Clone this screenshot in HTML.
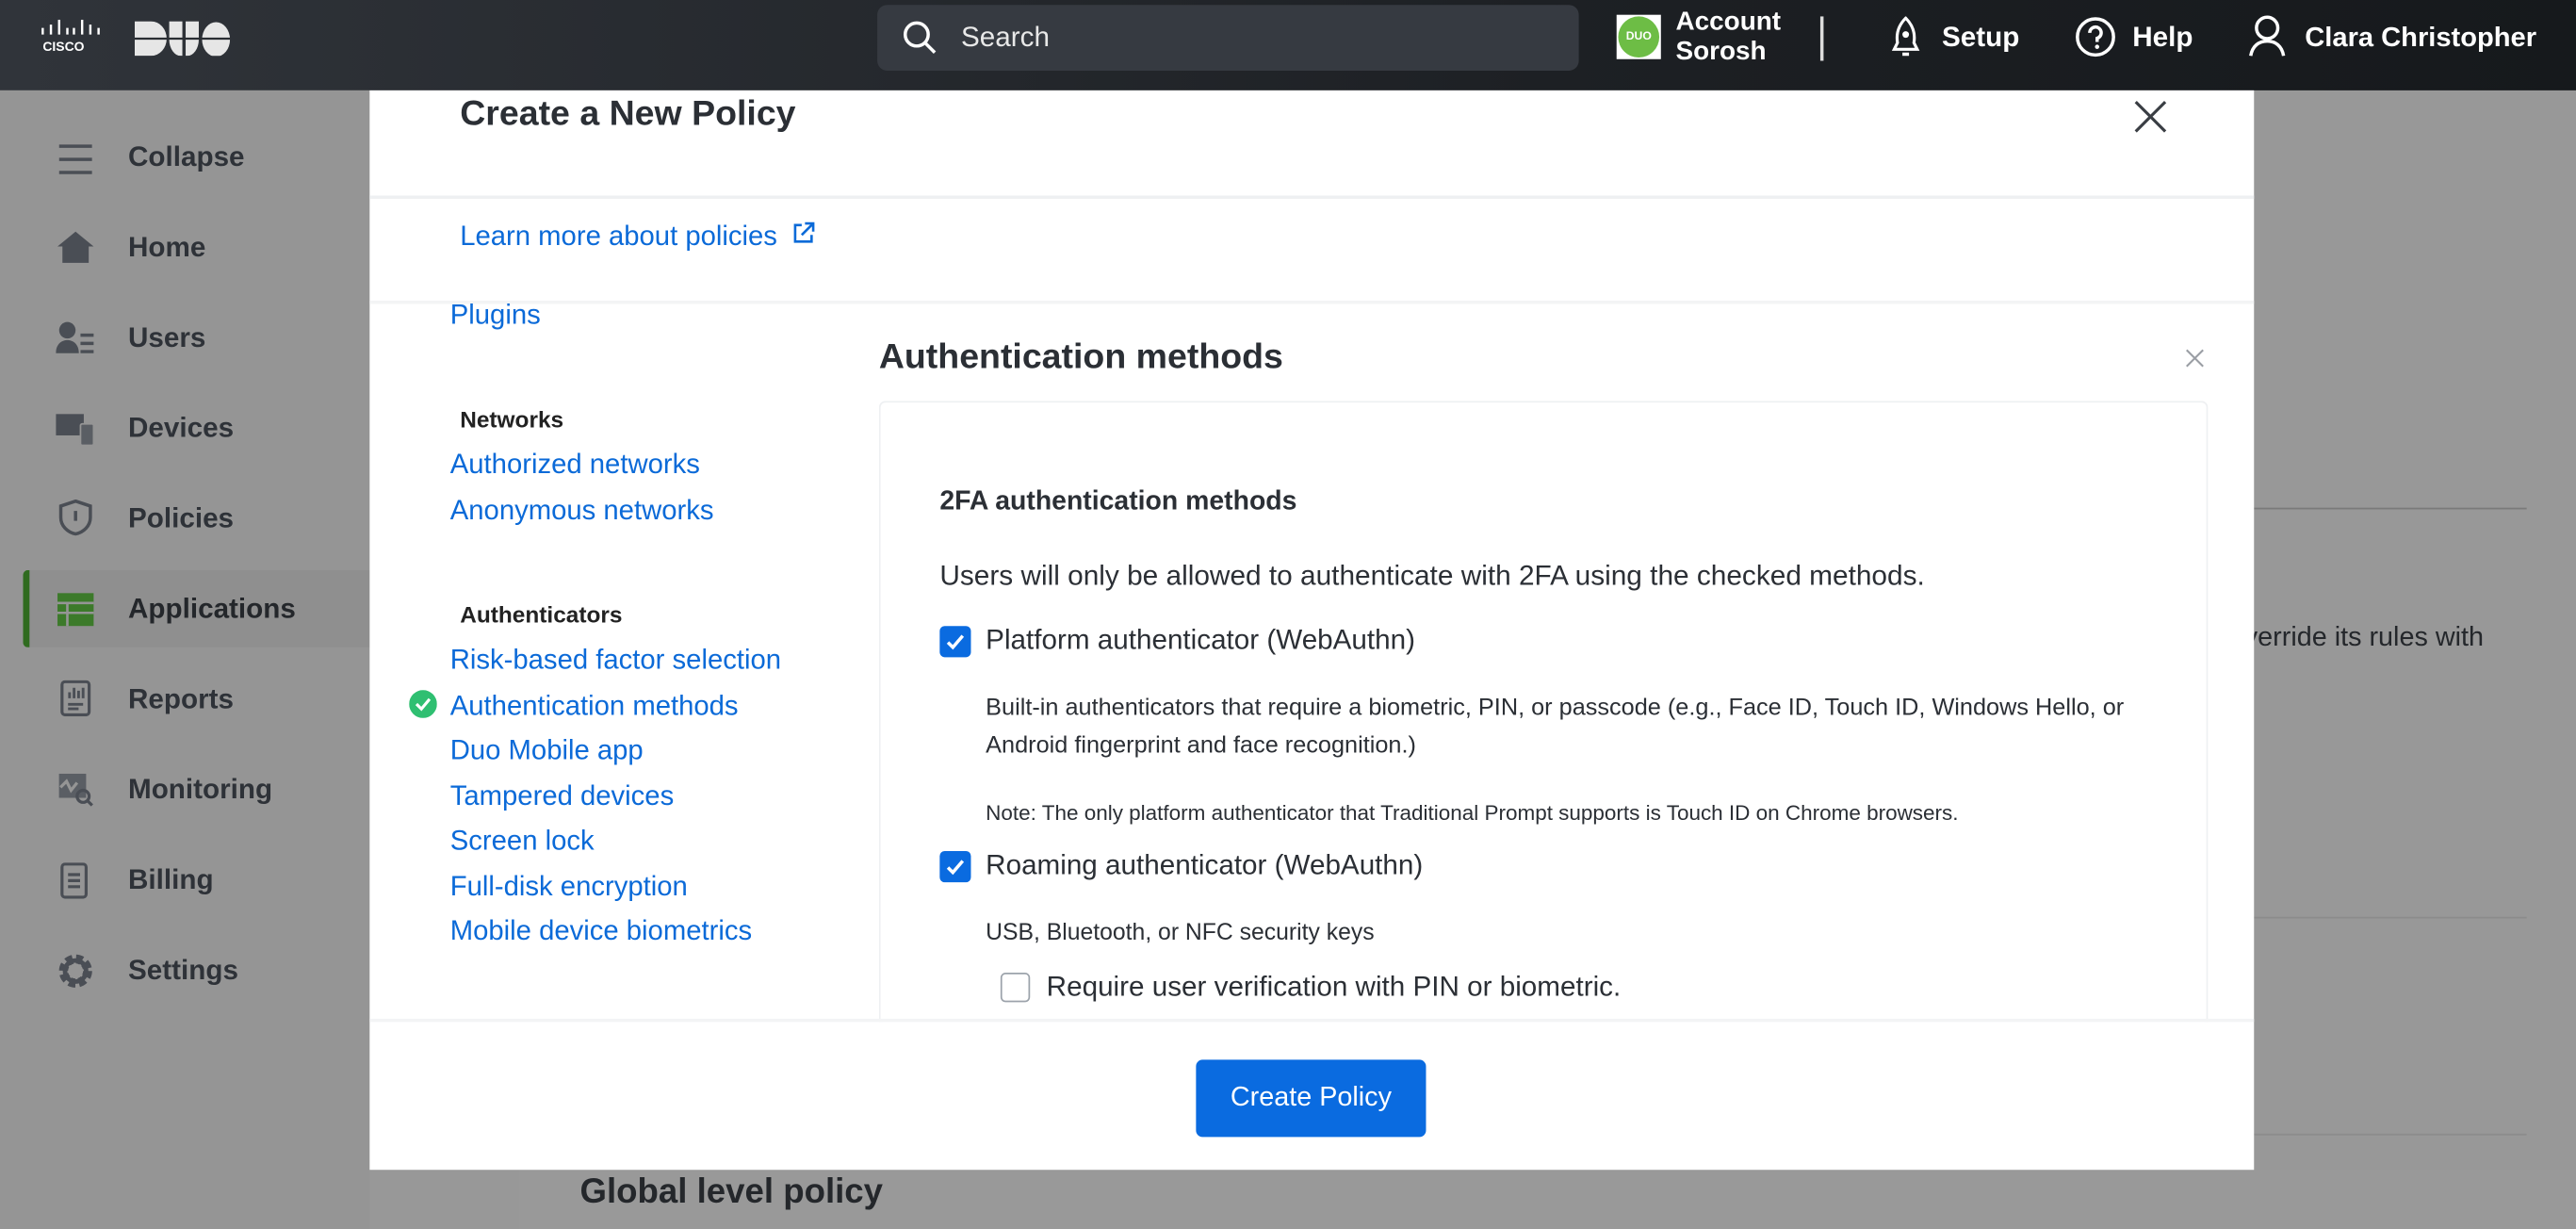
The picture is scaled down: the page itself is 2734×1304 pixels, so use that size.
<!DOCTYPE html>
<html><head><meta charset="utf-8"><style>
*{box-sizing:border-box;margin:0;padding:0}
html,body{width:2734px;height:1304px;overflow:hidden;background:#989898}
#s{width:1568px;height:748px;transform:scale(1.74362,1.7433);transform-origin:0 0;position:relative;font-family:"Liberation Sans",sans-serif;color:#2b2f35}
.a{position:absolute;white-space:nowrap}
.hdr{left:0;top:0;width:1568px;height:55px;background:linear-gradient(90deg,#30343a,#1d2024 60%,#16191c)}
.side{left:0;top:55px;width:225px;height:693px;background:#959595}
.nav{left:78px;font-size:17px;font-weight:bold;color:#2e3238}
.ic{left:34px;width:24px;height:22px}
.lnk{color:#0b6ad8;font-size:16.8px;left:274px}
.modal{left:225px;top:55px;width:1147px;height:657px;background:#fff}
.cb{width:19px;height:19px;border-radius:3px;background:#0a6be0}
</style></head><body><div id="s">
<div class="a hdr"></div>
<div class="a" style="left:24px;top:12px;color:#fff;font-size:8px;letter-spacing:1px">
<svg width="38" height="10" viewBox="0 0 38 10"><g stroke="#fff" stroke-width="1.4"><path d="M2 5v4M7 3v6M12 0v9M17 5v4M21 5v4M26 0v9M31 3v6M36 5v4"/></g></svg></div>
<div class="a" style="left:26px;top:24px;color:#fff;font-size:8px;font-weight:bold">CISCO</div>
<svg class="a" style="left:82px;top:13px" width="58" height="21" viewBox="0 0 58 21"><path d="M0 0h10a9 10 0 0 1 0 21H0z" fill="#e6e6e6"/><path d="M21 0h8v21h-1a7 10 0 0 1-7-10z" fill="#e6e6e6"/><path d="M31 0h8v11a7 10 0 0 1-7 10h-1z" fill="#e6e6e6"/><path d="M41 11a8.5 10.5 0 0 1 17 0a8.5 10.5 0 0 1-17 0z" fill="#e6e6e6"/><path d="M0 10.5h58" stroke="#2a2e33" stroke-width="1.3"/></svg>
<div class="a" style="left:534px;top:3px;width:427px;height:40px;border-radius:6px;background:#363a41"></div>
<svg class="a" style="left:548px;top:11px" width="24" height="24" viewBox="0 0 24 24"><circle cx="10" cy="10" r="7" fill="none" stroke="#fff" stroke-width="2"/><path d="M15 15l6 6" stroke="#fff" stroke-width="2"/></svg>
<div class="a" style="left:585px;top:13px;color:#e8e8e8;font-size:17px">Search</div>
<div class="a" style="left:984px;top:9px;width:27px;height:27px;background:#fff"><div style="margin:1px;width:25px;height:25px;border-radius:50%;background:#6dbd45;color:#fff;font-size:7px;font-weight:bold;text-align:center;line-height:25px">DUO</div></div>
<div class="a" style="left:1020px;top:5px;color:#fff;font-size:16px;font-weight:bold;line-height:18px">Account<br>Sorosh</div>
<div class="a" style="left:1108px;top:10px;width:2px;height:27px;background:#ddd"></div>
<svg class="a" style="left:1148px;top:10px" width="24" height="26" viewBox="0 0 24 26"><path d="M12 1c-4 4-6 9-5 15l-2 4h14l-2-4c1-6-1-11-5-15z" fill="none" stroke="#fff" stroke-width="1.8"/><circle cx="12" cy="11" r="2" fill="#fff"/><path d="M10 23h4" stroke="#fff" stroke-width="2"/></svg>
<div class="a" style="left:1182px;top:13px;color:#fff;font-size:17px;font-weight:bold">Setup</div>
<svg class="a" style="left:1263px;top:10px" width="25" height="25" viewBox="0 0 25 25"><circle cx="12.5" cy="12.5" r="11" fill="none" stroke="#fff" stroke-width="2"/><path d="M9 10a3.5 3.5 0 1 1 4.5 3.3v2.2" fill="none" stroke="#fff" stroke-width="2"/><circle cx="13.5" cy="18.5" r="1.3" fill="#fff"/></svg>
<div class="a" style="left:1298px;top:13px;color:#fff;font-size:17px;font-weight:bold">Help</div>
<svg class="a" style="left:1368px;top:9px" width="24" height="26" viewBox="0 0 24 26"><circle cx="12" cy="8" r="6.5" fill="none" stroke="#fff" stroke-width="2"/><path d="M2 25c1-6 5-9 10-9s9 3 10 9" fill="none" stroke="#fff" stroke-width="2"/></svg>
<div class="a" style="left:1403px;top:13px;color:#fff;font-size:16.7px;font-weight:bold">Clara Christopher</div>

<div class="a side"></div>
<div class="a" style="left:14px;top:347px;width:211px;height:47px;background:#8f8f8f;border-left:4px solid #2f6b1f;border-radius:3px 0 0 3px"></div>
<svg class="a ic" style="top:86px" viewBox="0 0 24 22"><path d="M2 3h20M2 11h20M2 19h20" stroke="#4a4e55" stroke-width="2"/></svg>
<svg class="a ic" style="top:139px" viewBox="0 0 24 22"><path d="M1 11L12 2l11 9h-3v10H4V11z" fill="#4a4e55"/></svg>
<svg class="a ic" style="top:195px" viewBox="0 0 24 22"><circle cx="7" cy="6" r="5" fill="#4a4e55"/><path d="M0 20c0-6 4-8 7-8s7 2 7 8z" fill="#4a4e55"/><path d="M15 9h8M15 14h8M15 19h8" stroke="#4a4e55" stroke-width="2"/></svg>
<svg class="a ic" style="top:250px" viewBox="0 0 24 22"><rect x="0" y="2" width="17" height="13" fill="#4a4e55"/><rect x="15" y="8" width="8" height="13" rx="1" fill="#5a5e64" stroke="#959595"/></svg>
<svg class="a ic" style="top:304px" viewBox="0 0 24 22"><path d="M12 1l9 3v7c0 5-4 9-9 10-5-1-9-5-9-10V4z" fill="none" stroke="#4a4e55" stroke-width="2"/><path d="M12 7v6" stroke="#4a4e55" stroke-width="2"/></svg>
<svg class="a ic" style="top:360px" viewBox="0 0 24 22"><rect x="1" y="1" width="22" height="20" fill="#3c7a2a"/><path d="M1 7h22M1 13h22M7 7v14" stroke="#959595" stroke-width="1.5"/></svg>
<svg class="a ic" style="top:414px" viewBox="0 0 24 24"><rect x="3" y="1" width="18" height="22" rx="2" fill="none" stroke="#4a4e55" stroke-width="2"/><path d="M8 12V8M11 12V5M14 12V7M17 12V5M7 16h10M7 19h7" stroke="#4a4e55" stroke-width="1.8"/></svg>
<svg class="a ic" style="top:470px" viewBox="0 0 24 24"><rect x="1" y="1" width="18" height="16" fill="#5a5e64"/><path d="M2 10l4-4 3 6 4-5" fill="none" stroke="#959595" stroke-width="2"/><circle cx="17" cy="16" r="4" fill="none" stroke="#4a4e55" stroke-width="2"/><path d="M20 19l3 3" stroke="#4a4e55" stroke-width="2"/></svg>
<svg class="a ic" style="top:525px" viewBox="0 0 24 24"><rect x="3" y="1" width="16" height="22" rx="2" fill="none" stroke="#4a4e55" stroke-width="2"/><path d="M7 8h8M7 12h8M7 16h8" stroke="#4a4e55" stroke-width="2"/></svg>
<svg class="a ic" style="top:580px" viewBox="0 0 24 24"><circle cx="12" cy="12" r="8" fill="none" stroke="#4a4e55" stroke-width="6" stroke-dasharray="4 2.3"/><circle cx="12" cy="12" r="7" fill="none" stroke="#4a4e55" stroke-width="3"/></svg>
<div class="a nav" style="top:86px">Collapse</div>
<div class="a nav" style="top:141px">Home</div>
<div class="a nav" style="top:196px">Users</div>
<div class="a nav" style="top:251px">Devices</div>
<div class="a nav" style="top:306px">Policies</div>
<div class="a nav" style="top:361px;color:#24272b">Applications</div>
<div class="a nav" style="top:416px">Reports</div>
<div class="a nav" style="top:471px">Monitoring</div>
<div class="a nav" style="top:526px">Billing</div>
<div class="a nav" style="top:581px">Settings</div>

<div class="a" style="left:316px;top:712px;width:1252px;height:36px;background:#999"></div>
<div class="a" style="left:353px;top:714px;font-size:21px;font-weight:bold;color:#24272b">Global level policy</div>
<div class="a" style="left:1372px;top:309px;width:166px;height:1px;background:#7a7a7a"></div>
<div class="a" style="left:1372px;top:558px;width:166px;height:1px;background:#8c8c8c"></div>
<div class="a" style="left:1372px;top:690px;width:166px;height:1px;background:#8c8c8c"></div>
<div class="a" style="left:1366px;top:379px;font-size:16.5px;color:#24272b">verride its rules with</div>

<div class="a modal"></div>
<div class="a" style="left:280px;top:57px;font-size:21.5px;font-weight:bold;color:#2b2f35">Create a New Policy</div>
<svg class="a" style="left:1298px;top:60px" width="22" height="22" viewBox="0 0 22 22"><path d="M2 2l18 18M20 2L2 20" stroke="#3a3e44" stroke-width="1.8"/></svg>
<div class="a" style="left:225px;top:119px;width:1147px;height:2px;background:#eef0f2"></div>
<div class="a lnk" style="left:280px;top:134px">Learn more about policies <svg width="14" height="14" viewBox="0 0 14 14" style="margin-left:4px"><path d="M6 2H2v10h10V8M8 1h5v5M13 1L6 8" fill="none" stroke="#0b6ad8" stroke-width="1.5"/></svg></div>
<div class="a" style="left:225px;top:183px;width:1147px;height:2px;background:#f3f4f5"></div>
<div class="a lnk" style="top:182px">Plugins</div>
<div class="a" style="left:280px;top:247px;font-size:14px;font-weight:bold;color:#222">Networks</div>
<div class="a lnk" style="top:273px">Authorized networks</div>
<div class="a lnk" style="top:301px">Anonymous networks</div>
<div class="a" style="left:280px;top:366px;font-size:14px;font-weight:bold;color:#222">Authenticators</div>
<div class="a lnk" style="top:392px">Risk-based factor selection</div>
<svg class="a" style="left:249px;top:420px" width="17" height="17" viewBox="0 0 17 17"><circle cx="8.5" cy="8.5" r="8.5" fill="#2fbf71"/><path d="M4.5 8.5l3 3 5-6" fill="none" stroke="#fff" stroke-width="1.8"/></svg>
<div class="a lnk" style="top:420px">Authentication methods</div>
<div class="a lnk" style="top:447px">Duo Mobile app</div>
<div class="a lnk" style="top:475px">Tampered devices</div>
<div class="a lnk" style="top:502px">Screen lock</div>
<div class="a lnk" style="top:530px">Full-disk encryption</div>
<div class="a lnk" style="top:557px">Mobile device biometrics</div>

<div class="a" style="left:535px;top:205px;font-size:21.5px;font-weight:bold;color:#2b2f35">Authentication methods</div>
<svg class="a" style="left:1330px;top:212px" width="12" height="12" viewBox="0 0 12 12"><path d="M1 1l10 10M11 1L1 11" stroke="#9a9ea4" stroke-width="1.2"/></svg>
<div class="a" style="left:535px;top:244px;width:809px;height:378px;border:1px solid #eef0f2;border-bottom:none;border-radius:4px 4px 0 0"></div>
<div class="a" style="left:572px;top:296px;font-size:16.3px;font-weight:bold;color:#2b2f35">2FA authentication methods</div>
<div class="a" style="left:572px;top:341px;font-size:17.1px;color:#2b2f35">Users will only be allowed to authenticate with 2FA using the checked methods.</div>
<div class="a cb" style="left:572px;top:381px"><svg width="19" height="19" viewBox="0 0 19 19"><path d="M5 10l3 3 6-7" fill="none" stroke="#fff" stroke-width="2"/></svg></div>
<div class="a" style="left:600px;top:380px;font-size:17px">Platform authenticator (WebAuthn)</div>
<div class="a" style="left:600px;top:420px;font-size:14.5px;line-height:23px;color:#2b2f35">Built-in authenticators that require a biometric, PIN, or passcode (e.g., Face ID, Touch ID, Windows Hello, or<br>Android fingerprint and face recognition.)</div>
<div class="a" style="left:600px;top:487px;font-size:12.9px">Note: The only platform authenticator that Traditional Prompt supports is Touch ID on Chrome browsers.</div>
<div class="a cb" style="left:572px;top:518px"><svg width="19" height="19" viewBox="0 0 19 19"><path d="M5 10l3 3 6-7" fill="none" stroke="#fff" stroke-width="2"/></svg></div>
<div class="a" style="left:600px;top:517px;font-size:17px">Roaming authenticator (WebAuthn)</div>
<div class="a" style="left:600px;top:560px;font-size:14.2px">USB, Bluetooth, or NFC security keys</div>
<div class="a" style="left:609px;top:592px;width:18px;height:18px;border:1.5px solid #9ca3ab;border-radius:3px"></div>
<div class="a" style="left:637px;top:591px;font-size:17px">Require user verification with PIN or biometric.</div>
<div class="a" style="left:225px;top:620px;width:1147px;height:2px;background:#f3f4f5"></div>
<div class="a" style="left:728px;top:645px;width:140px;height:47px;background:#0a6be0;border-radius:4px;color:#fff;font-size:16.5px;text-align:center;line-height:47px">Create Policy</div>
</div></body></html>
